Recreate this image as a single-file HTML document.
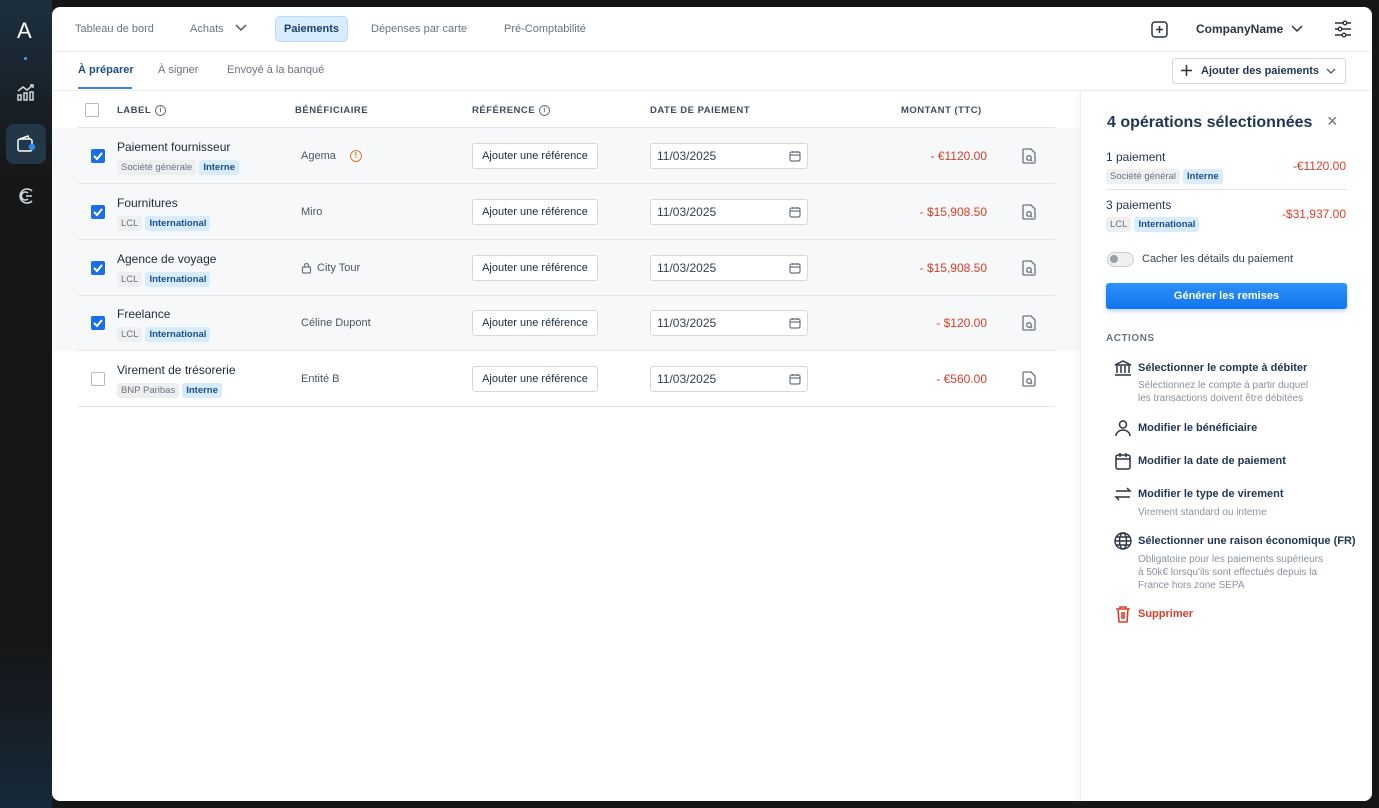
<!DOCTYPE html>
<html><head><meta charset="utf-8"><style>
*{box-sizing:border-box;margin:0;padding:0}
body{width:1379px;height:808px;overflow:hidden;background:#151617;font-family:"Liberation Sans",sans-serif;position:relative;color:#1e2a3b}
.side{position:absolute;left:0;top:0;width:52px;height:808px;background:linear-gradient(180deg,#1c2f3e 0%,#151617 22%,#151617 80%,#16293a 100%)}
.main{position:absolute;left:52px;top:7px;width:1320px;height:794px;background:#fff;border-radius:8px;overflow:hidden}
.abs{position:absolute}
.nav{font-size:11px;color:#6b7380;top:16px}
.hdr{font-size:9.5px;font-weight:bold;color:#3f4b5c;letter-spacing:.5px;top:98px;display:flex;align-items:center;gap:4px}
.info{display:inline-block;width:11px;height:11px;border:1px solid #6b7380;border-radius:50%;font-size:7px;text-align:center;line-height:9px;color:#6b7380}
.tag{display:inline-block;font-size:9.5px;padding:2px 4px;border-radius:3px;margin-right:3px}
.g{background:#eeeff1;color:#6b7380}.b{background:#d8ecff;color:#1c4f87;font-weight:bold}
.row{position:absolute;left:26px;width:977px;border-bottom:1px solid #e3e5e8;height:56px}
.cb{position:absolute;left:13px;top:21px;width:14px;height:14px;border-radius:2px;background:#1a6fe8}
.cb.off{background:#fff;border:1.5px solid #b5b9c0}
.lbl{position:absolute;left:39px;top:12px;font-size:12px;color:#1e2a3b}
.tags{position:absolute;left:39px;top:29px}
.ben{position:absolute;left:223px;top:22px;font-size:11px;color:#4b5563;display:flex;align-items:center}
.ref{position:absolute;left:394px;top:15px;width:126px;height:26px;border:1px solid #d5d8dc;border-radius:3px;background:#fff;font-size:11px;color:#1e2a3b;text-align:center;line-height:24px}
.date{position:absolute;left:572px;top:15px;width:158px;height:26px;border:1px solid #d5d8dc;border-radius:3px;background:#fff;font-size:12px;color:#374151;padding-left:6px;line-height:24px}
.date svg{position:absolute;right:6px;top:6px}
.amt{position:absolute;right:68px;top:21px;font-size:12px;color:#d6402a}
.doc{position:absolute;left:944px;top:20px}
.act{position:absolute;left:1086px;font-size:11px;font-weight:bold;color:#1f3552}
.sub{position:absolute;left:1086px;font-size:10px;color:#8a929c;line-height:13px}
.ic{position:absolute;left:1062px}
</style></head><body>
<div class="side">
<div class="abs" style="left:17px;top:18px;color:#fff;font-size:22px">A</div>
<div class="abs" style="left:24px;top:57px;width:3px;height:3px;border-radius:50%;background:#4ba3e8"></div>
<svg class="abs" style="left:16px;top:82px" width="20" height="20" fill="none" stroke="#cfd5dc" stroke-width="1.5"><path d="M2 9l5-4 4 3 6-5M14 3h3v3"/><rect x="2" y="13" width="3" height="5"/><rect x="8" y="11" width="3" height="7"/><rect x="14" y="10" width="3" height="8"/></svg>
<div class="abs" style="left:6px;top:124px;width:40px;height:40px;border-radius:8px;background:#233748"></div>
<svg class="abs" style="left:16px;top:134px" width="20" height="20" fill="none" stroke="#fff" stroke-width="1.5"><rect x="2" y="5" width="14" height="12" rx="2"/><path d="M4 5l8-3 1 3"/><circle cx="16" cy="13" r="2.5" fill="#2b8cf0" stroke="#2b8cf0"/></svg>
<svg class="abs" style="left:16px;top:186px" width="20" height="20" fill="none" stroke="#cfd5dc" stroke-width="1.6"><path d="M16 5a7 7 0 1 0 0 10M16 10h-6M12 7a4 4 0 1 0 0 6"/></svg>
</div>
<div class="main">
<div class="nav abs" style="left:23px">Tableau de bord</div>
<div class="nav abs" style="left:138px">Achats</div>
<svg class="abs" style="left:183px;top:17px" width="12" height="8" fill="none" stroke="#4b5563" stroke-width="1.5"><path d="M1 1l5 5 5-5"/></svg>
<div class="abs" style="left:223px;top:9px;width:73px;height:26px;border-radius:5px;background:#d8ecff;border:1px solid #b9dcfb;font-size:11px;color:#1c3e6b;text-align:center;line-height:24px;font-weight:bold">Paiements</div>
<div class="nav abs" style="left:319px">Dépenses par carte</div>
<div class="nav abs" style="left:452px">Pré-Comptabilité</div>
<svg class="abs" style="left:1099px;top:14px" width="17" height="17" fill="none" stroke="#2b3440" stroke-width="1.5"><rect x="1" y="1" width="15" height="15" rx="3"/><path d="M8.5 5v7M5 8.5h7"/></svg>
<div class="abs" style="left:1144px;top:15px;font-size:12px;font-weight:bold;color:#2b3440">CompanyName</div>
<svg class="abs" style="left:1239px;top:18px" width="12" height="8" fill="none" stroke="#2b3440" stroke-width="1.5"><path d="M1 1l5 5 5-5"/></svg>
<svg class="abs" style="left:1282px;top:13px" width="18" height="18" fill="none" stroke="#2b3440" stroke-width="1.4"><path d="M1 3h16M1 9h16M1 15h16"/><circle cx="11" cy="3" r="1.8" fill="#fff"/><circle cx="6" cy="9" r="1.8" fill="#fff"/><circle cx="10" cy="15" r="1.8" fill="#fff"/></svg>
<div class="abs" style="left:0;top:44px;width:1320px;height:1px;background:#eceef0"></div>
<div class="abs" style="left:26px;top:57px;font-size:11px;color:#1c4f87;font-weight:bold">À préparer</div>
<div class="abs" style="left:26px;top:80px;width:54px;height:2px;background:#3b7ee8"></div>
<div class="abs" style="left:106px;top:57px;font-size:11px;color:#6b7380">À signer</div>
<div class="abs" style="left:175px;top:57px;font-size:11px;color:#6b7380">Envoyé à la banqué</div>
<div class="abs" style="left:1120px;top:51px;width:174px;height:26px;border:1px solid #d5d8dc;border-radius:3px;font-size:11px;font-weight:bold;color:#1f3552;line-height:24px;padding-left:28px">Ajouter des paiements</div>
<svg class="abs" style="left:1128px;top:57px" width="13" height="13" fill="none" stroke="#2b3440" stroke-width="1.5"><path d="M6.5 1v11M1 6.5h11"/></svg>
<svg class="abs" style="left:1274px;top:61px" width="10" height="6" fill="none" stroke="#4b5563" stroke-width="1.3"><path d="M1 1l4 4 4-4"/></svg>
<div class="abs" style="left:0;top:83px;width:1320px;height:1px;background:#eceef0"></div>
<div class="abs" style="left:33px;top:96px;width:14px;height:14px;border:1.5px solid #b5b9c0;border-radius:2px"></div>
<div class="hdr abs" style="left:65px">LABEL <span class="info">i</span></div>
<div class="hdr abs" style="left:243px">BÉNÉFICIAIRE</div>
<div class="hdr abs" style="left:420px">RÉFÉRENCE <span class="info">i</span></div>
<div class="hdr abs" style="left:598px">DATE DE PAIEMENT</div>
<div class="hdr abs" style="left:849px">MONTANT (TTC)</div>
<div class="abs" style="left:0;top:121px;width:1028px;height:223px;background:#f7f8fa"></div>
<div class="abs" style="left:26px;top:120px;width:977px;height:1px;background:#e3e5e8"></div>

<div class="row" style="top:121px"><div class="cb"><svg width="14" height="14" fill="none" stroke="#fff" stroke-width="2"><path d="M3 7l3 3 5-6"/></svg></div><div class="lbl">Paiement fournisseur</div><div class="tags"><span class="tag g">Société générale</span><span class="tag b">Interne</span></div><div class="ben">Agema <span style="display:inline-block;margin-left:14px;width:12px;height:12px;border:1.3px solid #d9782c;border-radius:50%;color:#d9782c;font-size:8px;text-align:center;line-height:10px;font-weight:bold">!</span></div><div class="ref">Ajouter une référence</div><div class="date">11/03/2025<svg width="12" height="12" fill="none" stroke="#6b7380" stroke-width="1.2"><rect x="1" y="2" width="10" height="9" rx="1.5"/><path d="M1 5h10M4 1v2M8 1v2"/></svg></div><div class="amt">- €1120.00</div><svg class="doc" width="14" height="16" fill="none" stroke="#6b7380" stroke-width="1.3"><path d="M2 1h7l4 4v9a1 1 0 0 1-1 1H2a1 1 0 0 1-1-1V2a1 1 0 0 1 1-1z"/><circle cx="7" cy="10" r="2.3"/><path d="M8.7 11.7l1.5 1.5"/></svg></div>
<div class="row" style="top:177px"><div class="cb"><svg width="14" height="14" fill="none" stroke="#fff" stroke-width="2"><path d="M3 7l3 3 5-6"/></svg></div><div class="lbl">Fournitures</div><div class="tags"><span class="tag g">LCL</span><span class="tag b">International</span></div><div class="ben">Miro</div><div class="ref">Ajouter une référence</div><div class="date">11/03/2025<svg width="12" height="12" fill="none" stroke="#6b7380" stroke-width="1.2"><rect x="1" y="2" width="10" height="9" rx="1.5"/><path d="M1 5h10M4 1v2M8 1v2"/></svg></div><div class="amt">- $15,908.50</div><svg class="doc" width="14" height="16" fill="none" stroke="#6b7380" stroke-width="1.3"><path d="M2 1h7l4 4v9a1 1 0 0 1-1 1H2a1 1 0 0 1-1-1V2a1 1 0 0 1 1-1z"/><circle cx="7" cy="10" r="2.3"/><path d="M8.7 11.7l1.5 1.5"/></svg></div>
<div class="row" style="top:233px"><div class="cb"><svg width="14" height="14" fill="none" stroke="#fff" stroke-width="2"><path d="M3 7l3 3 5-6"/></svg></div><div class="lbl">Agence de voyage</div><div class="tags"><span class="tag g">LCL</span><span class="tag b">International</span></div><div class="ben"><svg width="11" height="12" fill="none" stroke="#6b7380" stroke-width="1.2" style="margin-right:5px"><rect x="1.5" y="5" width="8" height="6" rx="1"/><path d="M3.5 5V3.5a2 2 0 0 1 4 0V5"/></svg>City Tour</div><div class="ref">Ajouter une référence</div><div class="date">11/03/2025<svg width="12" height="12" fill="none" stroke="#6b7380" stroke-width="1.2"><rect x="1" y="2" width="10" height="9" rx="1.5"/><path d="M1 5h10M4 1v2M8 1v2"/></svg></div><div class="amt">- $15,908.50</div><svg class="doc" width="14" height="16" fill="none" stroke="#6b7380" stroke-width="1.3"><path d="M2 1h7l4 4v9a1 1 0 0 1-1 1H2a1 1 0 0 1-1-1V2a1 1 0 0 1 1-1z"/><circle cx="7" cy="10" r="2.3"/><path d="M8.7 11.7l1.5 1.5"/></svg></div>
<div class="row" style="top:288px"><div class="cb"><svg width="14" height="14" fill="none" stroke="#fff" stroke-width="2"><path d="M3 7l3 3 5-6"/></svg></div><div class="lbl">Freelance</div><div class="tags"><span class="tag g">LCL</span><span class="tag b">International</span></div><div class="ben">Céline Dupont</div><div class="ref">Ajouter une référence</div><div class="date">11/03/2025<svg width="12" height="12" fill="none" stroke="#6b7380" stroke-width="1.2"><rect x="1" y="2" width="10" height="9" rx="1.5"/><path d="M1 5h10M4 1v2M8 1v2"/></svg></div><div class="amt">- $120.00</div><svg class="doc" width="14" height="16" fill="none" stroke="#6b7380" stroke-width="1.3"><path d="M2 1h7l4 4v9a1 1 0 0 1-1 1H2a1 1 0 0 1-1-1V2a1 1 0 0 1 1-1z"/><circle cx="7" cy="10" r="2.3"/><path d="M8.7 11.7l1.5 1.5"/></svg></div>
<div class="row" style="top:344px"><div class="cb off"></div><div class="lbl">Virement de trésorerie</div><div class="tags"><span class="tag g">BNP Paribas</span><span class="tag b">Interne</span></div><div class="ben">Entité B</div><div class="ref">Ajouter une référence</div><div class="date">11/03/2025<svg width="12" height="12" fill="none" stroke="#6b7380" stroke-width="1.2"><rect x="1" y="2" width="10" height="9" rx="1.5"/><path d="M1 5h10M4 1v2M8 1v2"/></svg></div><div class="amt">- €560.00</div><svg class="doc" width="14" height="16" fill="none" stroke="#6b7380" stroke-width="1.3"><path d="M2 1h7l4 4v9a1 1 0 0 1-1 1H2a1 1 0 0 1-1-1V2a1 1 0 0 1 1-1z"/><circle cx="7" cy="10" r="2.3"/><path d="M8.7 11.7l1.5 1.5"/></svg></div>

<div class="abs" style="left:1028px;top:84px;width:292px;height:710px;background:#fff;border-left:1px solid #eceef0;box-shadow:-3px 0 6px rgba(0,0,0,.03)"></div>
<div class="abs" style="left:1055px;top:107px;font-size:16px;font-weight:bold;color:#1f3552">4 opérations sélectionnées</div>
<div class="abs" style="left:1275px;top:104px;font-size:18px;color:#6b7380">×</div>
<div class="abs" style="left:1054px;top:143px;font-size:12px;color:#1f3552">1 paiement</div>
<div class="abs" style="left:1054px;top:159px"><span class="tag g">Société général</span><span class="tag b">Interne</span></div>
<div class="abs" style="right:26px;top:152px;font-size:12px;color:#d6402a">-€1120.00</div>
<div class="abs" style="left:1054px;top:182px;width:241px;height:1px;background:#e3e5e8"></div>
<div class="abs" style="left:1054px;top:191px;font-size:12px;color:#1f3552">3 paiements</div>
<div class="abs" style="left:1054px;top:207px"><span class="tag g">LCL</span><span class="tag b">International</span></div>
<div class="abs" style="right:26px;top:200px;font-size:12px;color:#d6402a">-$31,937.00</div>
<div class="abs" style="left:1055px;top:245px;width:27px;height:15px;border-radius:8px;border:1.5px solid #c9ccd1;background:#eef0f2"><div style="position:absolute;left:2px;top:2px;width:8px;height:8px;border-radius:50%;background:#9aa0a8"></div></div>
<div class="abs" style="left:1090px;top:246px;font-size:11px;color:#374151">Cacher les détails du paiement</div>
<div class="abs" style="left:1054px;top:276px;width:241px;height:26px;border-radius:3px;background:linear-gradient(180deg,#2b92fb,#1274ec);box-shadow:0 2px 4px rgba(20,110,230,.3);color:#fff;font-size:11px;font-weight:bold;text-align:center;line-height:26px">Générer les remises</div>
<div class="abs" style="left:1054px;top:326px;font-size:10px;font-weight:bold;color:#6b7380;letter-spacing:.5px">ACTIONS</div>
<svg class="ic" style="top:352px" width="18" height="18" fill="none" stroke="#2b3440" stroke-width="1.5"><path d="M1 6l8-4 8 4zM3 7v7M7 7v7M11 7v7M15 7v7M1 16h16"/></svg>
<div class="act" style="top:355px">Sélectionner le compte à débiter</div>
<div class="sub" style="top:372px">Sélectionnez le compte à partir duquel<br>les transactions doivent être débitées</div>
<svg class="ic" style="top:412px" width="18" height="18" fill="none" stroke="#2b3440" stroke-width="1.5"><circle cx="9" cy="5.5" r="3.5"/><path d="M2 17a7 6 0 0 1 14 0"/></svg>
<div class="act" style="top:415px">Modifier le bénéficiaire</div>
<svg class="ic" style="top:445px" width="18" height="18" fill="none" stroke="#2b3440" stroke-width="1.5"><rect x="2" y="3" width="14" height="14" rx="2"/><path d="M2 7h14M6 1v4M12 1v4"/></svg>
<div class="act" style="top:448px">Modifier la date de paiement</div>
<svg class="ic" style="top:478px" width="18" height="18" fill="none" stroke="#2b3440" stroke-width="1.5"><path d="M2 6h14l-3-3M16 12H2l3 3"/></svg>
<div class="act" style="top:481px">Modifier le type de virement</div>
<div class="sub" style="top:499px">Virement standard ou interne</div>
<svg class="ic" style="top:525px" width="18" height="18" fill="none" stroke="#2b3440" stroke-width="1.4"><circle cx="9" cy="9" r="8"/><ellipse cx="9" cy="9" rx="3.5" ry="8"/><path d="M1 9h16M2 5h14M2 13h14"/></svg>
<div class="act" style="top:528px">Sélectionner une raison économique (FR)</div>
<div class="sub" style="top:546px">Obligatoire pour les paiements supérieurs<br>à 50k€ lorsqu'ils sont effectués depuis la<br>France hors zone SEPA</div>
<svg class="ic" style="top:598px" width="18" height="18" fill="none" stroke="#d6402a" stroke-width="1.6"><path d="M2 4h14M6 4V2h6v2M4 4l1 13h8l1-13M8 7v7M10 7v7"/></svg>
<div class="act" style="top:601px;color:#d6402a">Supprimer</div>
</div>
</body></html>
